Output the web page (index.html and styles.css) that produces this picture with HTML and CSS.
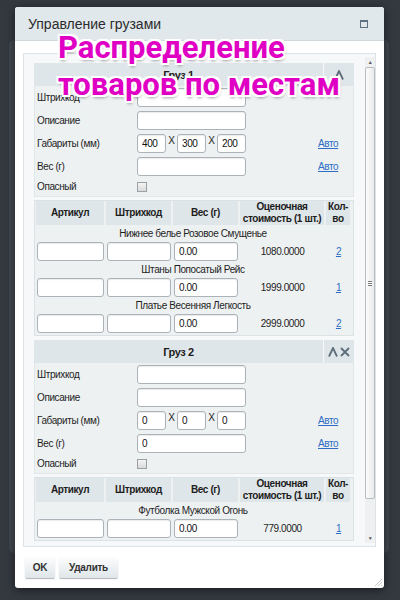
FILE: index.html
```html
<!DOCTYPE html>
<html lang="ru">
<head>
    <meta charset="UTF-8">
    <title>Управление грузами</title>
    <link rel="stylesheet" href="styles.css">
</head>
<body>
    <!-- window behind the dialog -->
    <div class="back-window"></div>

    <div class="dialog">
        <div class="dialog-title">
            <span>Управление грузами</span>
            <span class="max-icon"></span>
        </div>

        <div class="dialog-body">
            <div class="content-box">
                <div class="scroll-area">

                    <!-- Cargo 1 -->
                    <div class="cargo">
                        <div class="cargo-head">
                            <div class="cargo-title">Груз 1</div>
                            <div class="cargo-tools">
                                <svg width="10" height="10" viewBox="0 0 10 10"><polyline points="1,9.5 5,1 9,9.5" fill="none" stroke="#5c6c79" stroke-width="1.8"/></svg>
                            </div>
                        </div>
                        <div class="cargo-form">
                            <div class="form-row">
                                <label>Штрихкод</label>
                                <input type="text" class="field">
                            </div>
                            <div class="form-row">
                                <label>Описание</label>
                                <input type="text" class="field">
                            </div>
                            <div class="form-row">
                                <label>Габариты (мм)</label>
                                <div class="dims">
                                    <input type="text" class="dim" value="400"><span>X</span>
                                    <input type="text" class="dim" value="300"><span>X</span>
                                    <input type="text" class="dim" value="200">
                                </div>
                                <a href="#" class="auto">Авто</a>
                            </div>
                            <div class="form-row">
                                <label>Вес (г)</label>
                                <input type="text" class="field">
                                <a href="#" class="auto">Авто</a>
                            </div>
                            <div class="form-row check-row">
                                <label>Опасный</label>
                                <span class="checkbox"></span>
                            </div>
                        </div>
                        <div class="items">
                            <table>
                                <tr>
                                    <th class="c-art">Артикул</th>
                                    <th class="c-bar">Штрихкод</th>
                                    <th class="c-w">Вес (г)</th>
                                    <th class="c-price">Оценочная стоимость (1 шт.)</th>
                                    <th>Кол-во</th>
                                </tr>
                                <tr class="item-name"><td colspan="5">Нижнее белье Розовое Смущенье</td></tr>
                                <tr class="item-row">
                                    <td><input type="text"></td>
                                    <td><input type="text"></td>
                                    <td><input type="text" value="0.00"></td>
                                    <td class="price">1080.0000</td>
                                    <td class="qty"><a href="#">2</a></td>
                                </tr>
                                <tr class="item-name"><td colspan="5">Штаны Попосатый Рейс</td></tr>
                                <tr class="item-row">
                                    <td><input type="text"></td>
                                    <td><input type="text"></td>
                                    <td><input type="text" value="0.00"></td>
                                    <td class="price">1999.0000</td>
                                    <td class="qty"><a href="#">1</a></td>
                                </tr>
                                <tr class="item-name"><td colspan="5">Платье Весенняя Легкость</td></tr>
                                <tr class="item-row">
                                    <td><input type="text"></td>
                                    <td><input type="text"></td>
                                    <td><input type="text" value="0.00"></td>
                                    <td class="price">2999.0000</td>
                                    <td class="qty"><a href="#">2</a></td>
                                </tr>
                            </table>
                        </div>
                    </div>

                    <!-- Cargo 2 -->
                    <div class="cargo">
                        <div class="cargo-head">
                            <div class="cargo-title">Груз 2</div>
                            <div class="cargo-tools">
                                <svg width="10" height="10" viewBox="0 0 10 10"><polyline points="1,9.5 5,1 9,9.5" fill="none" stroke="#5c6c79" stroke-width="1.8"/></svg>
                                <svg width="10" height="10" viewBox="0 0 10 10"><path d="M1,1 L9,9 M9,1 L1,9" stroke="#5c6c79" stroke-width="1.8"/></svg>
                            </div>
                        </div>
                        <div class="cargo-form">
                            <div class="form-row">
                                <label>Штрихкод</label>
                                <input type="text" class="field">
                            </div>
                            <div class="form-row">
                                <label>Описание</label>
                                <input type="text" class="field">
                            </div>
                            <div class="form-row">
                                <label>Габариты (мм)</label>
                                <div class="dims">
                                    <input type="text" class="dim" value="0"><span>X</span>
                                    <input type="text" class="dim" value="0"><span>X</span>
                                    <input type="text" class="dim" value="0">
                                </div>
                                <a href="#" class="auto">Авто</a>
                            </div>
                            <div class="form-row">
                                <label>Вес (г)</label>
                                <input type="text" class="field" value="0">
                                <a href="#" class="auto">Авто</a>
                            </div>
                            <div class="form-row check-row">
                                <label>Опасный</label>
                                <span class="checkbox"></span>
                            </div>
                        </div>
                        <div class="items">
                            <table>
                                <tr>
                                    <th class="c-art">Артикул</th>
                                    <th class="c-bar">Штрихкод</th>
                                    <th class="c-w">Вес (г)</th>
                                    <th class="c-price">Оценочная стоимость (1 шт.)</th>
                                    <th>Кол-во</th>
                                </tr>
                                <tr class="item-name"><td colspan="5">Футболка Мужской Огонь</td></tr>
                                <tr class="item-row">
                                    <td><input type="text"></td>
                                    <td><input type="text"></td>
                                    <td><input type="text" value="0.00"></td>
                                    <td class="price">779.0000</td>
                                    <td class="qty"><a href="#">1</a></td>
                                </tr>
                            </table>
                        </div>
                    </div>
                </div>

                <!-- fake scrollbar -->
                <div class="scrollbar">
                    <div class="sb-arrow">&#9650;</div>
                    <div class="sb-thumb"><span></span></div>
                    <div class="sb-track"></div>
                    <div class="sb-arrow">&#9660;</div>
                </div>
            </div>
        </div>

        <div class="dialog-footer">
            <button class="btn btn-ok">OK</button>
            <button class="btn">Удалить</button>
        </div>

        <svg class="grip" width="10" height="10" viewBox="0 0 10 10">
            <path d="M9,2 L2,9 M9,5 L5,9 M9,8 L8,9" stroke="#c4c9cc" stroke-width="1"/>
        </svg>
    </div>

    <!-- caption over the screenshot -->
    <div class="caption">Распределение<br>товаров по местам</div>
</body>
</html>
```

FILE: styles.css
```css
/* Page */
body {
    margin: 0;
    width: 400px;
    height: 600px;
    overflow: hidden;
    position: relative;
    background: #343940;
    font-family: "Liberation Sans", Arial, sans-serif;
    font-size: 10px;
    letter-spacing: -0.4px;
    color: #1e1e1e;
}

.back-window {
    position: absolute;
    left: 9px;
    top: 40px;
    width: 380px;
    height: 513px;
    background: #42474e;
    border-radius: 5px;
}

/* Dialog */
.dialog {
    position: relative;
    margin: 7px 0 0 15px;
    width: 369px;
    height: 581px;
    background: #fff;
    border-radius: 3px;
    box-shadow: 0 2px 10px rgba(0, 0, 0, 0.5);
    overflow: hidden;
}

.dialog-title {
    height: 33px;
    display: flex;
    align-items: center;
    justify-content: space-between;
    padding: 0 16px 0 13px;
    background: #e1e8eb;
    border-bottom: 1px solid #d2d9dc;
    font-size: 14px;
    letter-spacing: 0;
    color: #2b2b2b;
}

.max-icon {
    width: 6px;
    height: 5px;
    border: 1px solid #5f7180;
    border-top-width: 2px;
}

.dialog-body {
    padding: 12px 8px 0 8px;
}

.content-box {
    height: 492px;
    display: flex;
    border: 1px solid #dde3e6;
    background: #f6f8f9;
}

.scroll-area {
    flex: 1;
    padding: 9px 0 0 10px;
    overflow: hidden;
}

/* Scrollbar */
.scrollbar {
    width: 10px;
    margin: 3px 0 3px 0;
    display: flex;
    flex-direction: column;
    background: #eef0f1;
}

.sb-arrow {
    height: 10px;
    font-size: 5px;
    line-height: 10px;
    text-align: center;
    color: #555;
}

.sb-thumb {
    height: 432px;
    border: 1px solid #b9bdc0;
    border-radius: 2px;
    background: linear-gradient(to right, #fbfbfb, #e9eaeb);
    box-sizing: border-box;
    display: flex;
    align-items: center;
    justify-content: center;
}

.sb-thumb span {
    width: 4px;
    height: 5px;
    border-top: 1px solid #777;
    border-bottom: 1px solid #777;
    box-sizing: border-box;
    background: linear-gradient(#fff 40%, #777 40%, #777 60%, #fff 60%);
}

.sb-track {
    flex: 1;
}

/* Cargo panel */
.cargo {
    width: 320px;
    margin-bottom: 4px;
}

.cargo-head {
    height: 23px;
    display: flex;
}

.cargo-title {
    flex: 1;
    background: #dfe6e9;
    display: flex;
    align-items: center;
    justify-content: center;
    font-weight: bold;
    font-size: 11px;
    color: #1d1d1d;
}

.cargo-tools {
    width: 30px;
    margin-left: 1px;
    background: #dfe6e9;
    display: flex;
    align-items: center;
    justify-content: center;
    gap: 2px;
}

.cargo-form {
    background: #edf1f2;
    border: 1px solid #e1e7e9;
    border-top: none;
    padding: 2px 0 3px 2px;
    display: flex;
    flex-direction: column;
    gap: 4px;
}

.form-row {
    height: 19px;
    display: flex;
    align-items: center;
}

.form-row label {
    width: 100px;
    flex-shrink: 0;
}

.check-row {
    height: 13px;
}

input {
    box-sizing: border-box;
    height: 19px;
    margin: 0;
    padding: 0 4px;
    border: 1px solid #abb3b8;
    border-radius: 3px;
    background: #fff;
    box-shadow: inset 0 1px 1px rgba(0, 0, 0, 0.08);
    font-family: inherit;
    font-size: 10px;
    letter-spacing: -0.4px;
    color: #111;
}

.field {
    width: 109px;
}

.dims {
    display: flex;
    align-items: flex-start;
    height: 19px;
}

.dims span {
    width: 11px;
    text-align: center;
    line-height: 13px;
}

.dim {
    width: 29px;
}

.auto {
    margin-left: 72px;
    color: #2e6dc3;
}

.checkbox {
    width: 8px;
    height: 8px;
    border: 1px solid #9aa1a6;
    background: linear-gradient(#f4f4f4, #dadada);
}

/* Items table */
.items {
    margin-top: 3px;
    background: #edf1f2;
    border: 1px solid #dbe2e5;
}

.items table {
    width: 100%;
    table-layout: fixed;
    border-spacing: 2px 0;
    margin-left: -1px;
}

.items th {
    height: 24px;
    padding: 0;
    background: #dfe6e9;
    font-size: 10px;
    line-height: 12px;
    color: #1d1d1d;
}

.c-art { width: 68px; }
.c-bar { width: 65px; }
.c-w { width: 65px; }
.c-price { width: 84px; }

.item-name td {
    height: 17px;
    padding: 0;
    text-align: center;
}

.item-row td {
    padding: 0 0 0 1px;
    height: 19px;
}

.item-row input {
    width: 100%;
}

.price {
    text-align: center;
}

.qty {
    text-align: center;
}

.qty a {
    color: #2e6dc3;
}

.items table tr:last-child td {
    padding-bottom: 2px;
}

/* Footer */
.dialog-footer {
    padding: 10px 10px;
    display: flex;
    gap: 4px;
}

.btn {
    height: 21px;
    padding: 0 10px;
    border: none;
    border-radius: 2px;
    background: linear-gradient(#fdfdfd, #dfe6e9);
    box-shadow: 0 1px 1px rgba(0, 0, 0, 0.3);
    font-family: inherit;
    font-size: 10px;
    letter-spacing: -0.3px;
    font-weight: bold;
    color: #333;
}

.btn-ok {
    width: 30px;
    padding: 0;
}

.grip {
    position: absolute;
    right: 1px;
    bottom: 1px;
}

/* Caption overlay */
.caption {
    position: absolute;
    left: 58px;
    top: 29px;
    font-family: Roboto, "Noto Sans", sans-serif;
    font-weight: bold;
    font-size: 31px;
    line-height: 37px;
    letter-spacing: 0;
    color: #e000c4;
    text-shadow:
        2px 0 0 #fff, -2px 0 0 #fff, 0 2px 0 #fff, 0 -2px 0 #fff,
        2px 2px 0 #fff, -2px -2px 0 #fff, 2px -2px 0 #fff, -2px 2px 0 #fff,
        1px 3px 3px rgba(0, 0, 0, 0.35);
}
```
